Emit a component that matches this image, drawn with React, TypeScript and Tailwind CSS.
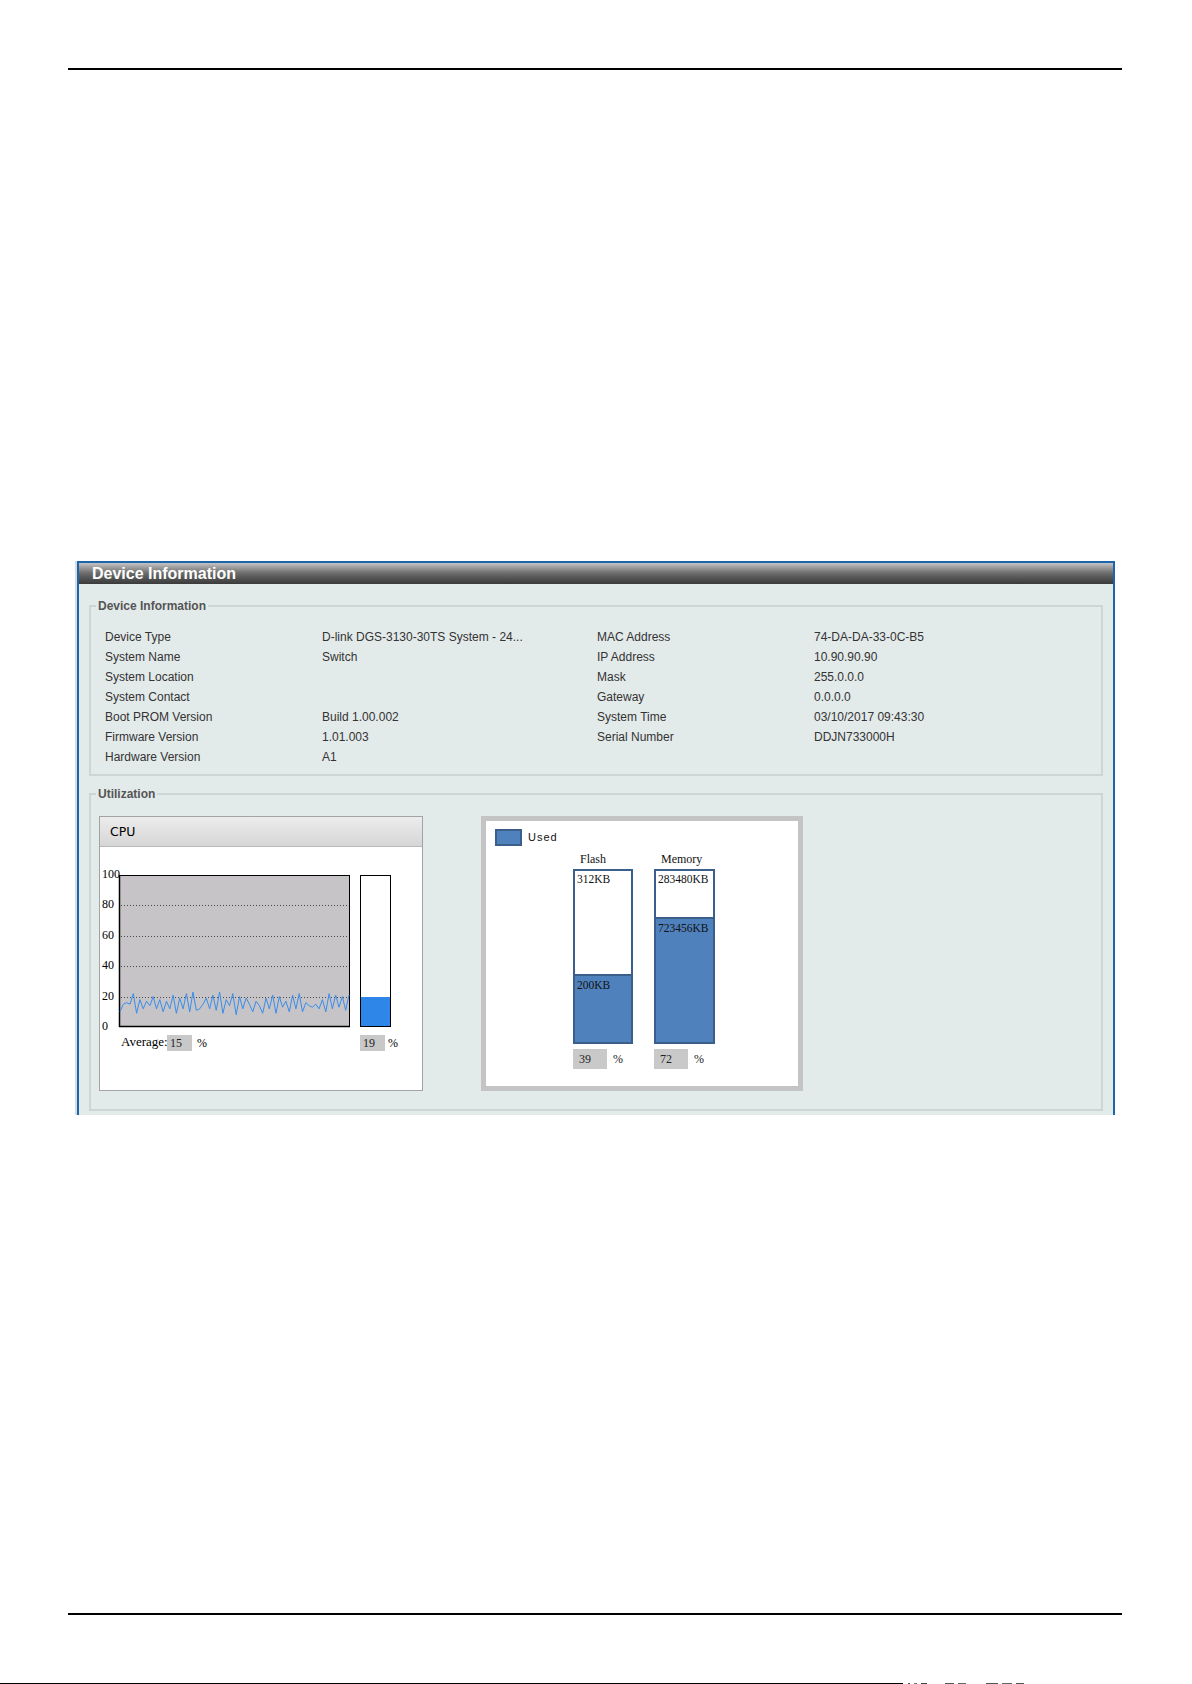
import React from "react";

const leftRows: [string, string][] = [
  ["Device Type", "D-link DGS-3130-30TS System - 24..."],
  ["System Name", "Switch"],
  ["System Location", ""],
  ["System Contact", ""],
  ["Boot PROM Version", "Build 1.00.002"],
  ["Firmware Version", "1.01.003"],
  ["Hardware Version", "A1"],
];

const rightRows: [string, string][] = [
  ["MAC Address", "74-DA-DA-33-0C-B5"],
  ["IP Address", "10.90.90.90"],
  ["Mask", "255.0.0.0"],
  ["Gateway", "0.0.0.0"],
  ["System Time", "03/10/2017 09:43:30"],
  ["Serial Number", "DDJN733000H"],
  ["", ""],
];

// recent CPU samples (percent)
const samples = [
  10, 15, 16, 15, 22, 9, 18, 12, 17, 14, 20, 12, 18, 10, 17, 12, 21, 9, 19, 12,
  22, 10, 23, 11, 12, 15, 19, 12, 21, 11, 23, 9, 18, 14, 22, 8, 20, 12, 19, 15,
  10, 17, 14, 9, 19, 12, 21, 9, 20, 13, 17, 10, 21, 12, 22, 10, 16, 14, 13, 15,
  12, 18, 10, 22, 12, 21, 13, 20, 11, 21,
];

function CpuGraph() {
  const x0 = 20;
  const x1 = 249;
  const top = 28;
  const bottom = 180;
  const scale = (bottom - top) / 100;
  const step = (x1 - x0) / (samples.length - 1);
  const pts = samples
    .map((v, i) => `${(x0 + i * step).toFixed(1)},${(bottom - v * scale).toFixed(1)}`)
    .join(" ");
  const ticks = [100, 80, 60, 40, 20, 0];
  return (
    <svg width="322" height="188" className="block">
      <rect x="19.5" y="28.5" width="230" height="151" fill="#c6c4c7" stroke="#000" strokeWidth="1" />
      {[80, 60, 40, 20].map((t) => (
        <line
          key={t}
          x1="21"
          x2="248"
          y1={Math.round(bottom - t * scale) + 0.5}
          y2={Math.round(bottom - t * scale) + 0.5}
          stroke="#4a4a4a"
          strokeWidth="1"
          strokeDasharray="1 2"
        />
      ))}
      <line x1="19.5" x2="19.5" y1="28" y2="180" stroke="#000" strokeWidth="1.5" />
      <line x1="19" x2="250" y1="179.5" y2="179.5" stroke="#000" strokeWidth="1.5" />
      <polyline points={pts} fill="none" stroke="#3b8dea" strokeWidth="1" />
      {ticks.map((t) => (
        <text
          key={t}
          x="2"
          y={Math.round(bottom - t * scale) + 2.5}
          fontFamily="'Liberation Serif', 'Times New Roman', serif"
          fontSize="12"
          fill="#000"
        >
          {t}
        </text>
      ))}
      <rect x="260.5" y="28.5" width="30" height="151" fill="#fff" stroke="#000" strokeWidth="1" />
      <rect x="261" y="150" width="29" height="29" fill="#2e86e8" />
    </svg>
  );
}

function StorageBar({
  label,
  width,
  freeText,
  usedText,
  freeHeight,
  pct,
}: {
  label: string;
  width: string;
  freeText: string;
  usedText: string;
  freeHeight: string;
  pct: string;
}) {
  return (
    <div className={`${width} flex flex-col`}>
      <div className="h-[14px] leading-[14px] pl-[7px] text-[12px] text-[#111] whitespace-nowrap">{label}</div>
      <div className="mt-[3px] h-[175px] border-2 border-[#3b5e8a] flex flex-col">
        <div className={`${freeHeight} bg-white pl-[2px] pt-[1px] leading-[14px] text-[11.5px] text-[#111] whitespace-nowrap`}>
          {freeText}
        </div>
        <div className="flex-1 border-t-2 border-[#3b5e8a] bg-[#4f81bd] pl-[2px] pt-[2px] leading-[14px] text-[11.5px] text-[#111] whitespace-nowrap">
          {usedText}
        </div>
      </div>
      <div className="mt-[5px] flex items-center">
        <div className="w-[34px] h-[20px] bg-[#c9c9c9] pl-[6px] leading-[20px] text-[12px] text-[#222]">{pct}</div>
        <span className="ml-[6px] text-[12px] text-[#222] leading-[20px]">%</span>
      </div>
    </div>
  );
}

export default function App() {
  return (
    <div className="w-[1192px] h-[1684px] bg-white flex flex-col font-['Liberation_Sans',Arial,sans-serif]">
      <div className="mt-[68px] ml-[68px] w-[1054px] h-[2px] bg-black" />

      <div className="mt-[491px] ml-[77px] w-[1038px] h-[554px] border-2 border-b-0 border-[#1b65ad] bg-[#e3eaea] shadow-[-2px_0_0_#d9dcdc] flex flex-col">
        <div className="h-[21px] bg-gradient-to-b from-[#c4c4c4] via-[#6a6a6a] to-[#3a3a3a] pl-[13px] text-[16px] font-bold leading-[21px] text-white">
          Device Information
        </div>

        <div className="px-[10px] pt-[15px] pb-[4px] flex flex-col">
          <fieldset className="border-2 border-[#cdd5d5] pl-[5px]">
            <legend className="px-[2px] text-[12px] font-bold leading-[14px] text-[#555]">Device Information</legend>
            <div className="pl-[9px] pt-[14px] pb-[7px] grid grid-cols-[217px_275px_217px_1fr] text-[12px] leading-[20px] text-[#333]">
              {leftRows.map((row, i) => (
                <React.Fragment key={i}>
                  <div className="whitespace-nowrap">{row[0]}</div>
                  <div className="whitespace-nowrap">{row[1]}</div>
                  <div className="whitespace-nowrap">{rightRows[i][0]}</div>
                  <div className="whitespace-nowrap">{rightRows[i][1]}</div>
                </React.Fragment>
              ))}
            </div>
          </fieldset>

          <fieldset className="mt-[11px] border-2 border-[#cdd5d5] pl-[5px]">
            <legend className="px-[2px] text-[12px] font-bold leading-[14px] text-[#555]">Utilization</legend>
            <div className="pl-[3px] pt-[15px] pb-[18px] flex gap-[58px]">
              {/* CPU widget */}
              <div className="w-[324px] h-[275px] border border-[#a3a3a3] bg-white flex flex-col">
                <div className="h-[30px] border-b border-[#b9b9b9] bg-gradient-to-b from-[#ececec] to-[#d6d6d6] pl-[10px] text-[12.5px] leading-[29px] text-black font-['DejaVu_Sans',Verdana,sans-serif]">
                  CPU
                </div>
                <CpuGraph />
                <div className="flex items-start font-['Liberation_Serif','Times_New_Roman',serif] text-[12px] text-black">
                  <div className="w-[260px] flex items-start">
                    <span className="ml-[21px] w-[46px] text-[13px] leading-[14px] whitespace-nowrap">Average:</span>
                    <span className="w-[25px] h-[16px] bg-[#c8c8c8] pl-[3px] leading-[16px] text-[#222]">15</span>
                    <span className="ml-[5px] leading-[16px]">%</span>
                  </div>
                  <span className="w-[25px] h-[16px] bg-[#c8c8c8] pl-[3px] leading-[16px] text-[#222]">19</span>
                  <span className="ml-[3px] leading-[16px]">%</span>
                </div>
              </div>

              {/* Flash / Memory widget */}
              <div className="w-[322px] h-[275px] border-[5px] border-[#c4c4c4] bg-white pl-[9px] pt-[8px] flex flex-col">
                <div className="h-[17px] flex items-center">
                  <div className="w-[27px] h-[17px] border-2 border-[#3b5e8a] bg-[#4f81bd]" />
                  <span className="ml-[6px] text-[11px] tracking-[1px] text-[#111]">Used</span>
                </div>
                <div className="mt-[6px] ml-[78px] flex gap-[21px] font-['Liberation_Serif','Times_New_Roman',serif]">
                  <StorageBar label="Flash" width="w-[60px]" freeText="312KB" usedText="200KB" freeHeight="h-[103px]" pct="39" />
                  <StorageBar label="Memory" width="w-[61px]" freeText="283480KB" usedText="723456KB" freeHeight="h-[46px]" pct="72" />
                </div>
              </div>
            </div>
          </fieldset>
        </div>
      </div>

      <div className="mt-[498px] ml-[68px] w-[1054px] h-[2px] bg-black" />
      <div className="mt-auto h-px flex items-center">
        <div className="w-[903px] h-px bg-black" />
        <div className="ml-[5px] w-[2px] h-px bg-[#555]" />
        <div className="ml-[4px] w-[3px] h-px bg-[#777]" />
        <div className="ml-[4px] w-[6px] h-px bg-[#444]" />
        <div className="ml-[18px] w-[9px] h-px bg-[#555]" />
        <div className="ml-[4px] w-[8px] h-px bg-[#666]" />
        <div className="ml-[20px] w-[12px] h-px bg-[#555]" />
        <div className="ml-[4px] w-[10px] h-px bg-[#666]" />
        <div className="ml-[4px] w-[8px] h-px bg-[#555]" />
      </div>
    </div>
  );
}
